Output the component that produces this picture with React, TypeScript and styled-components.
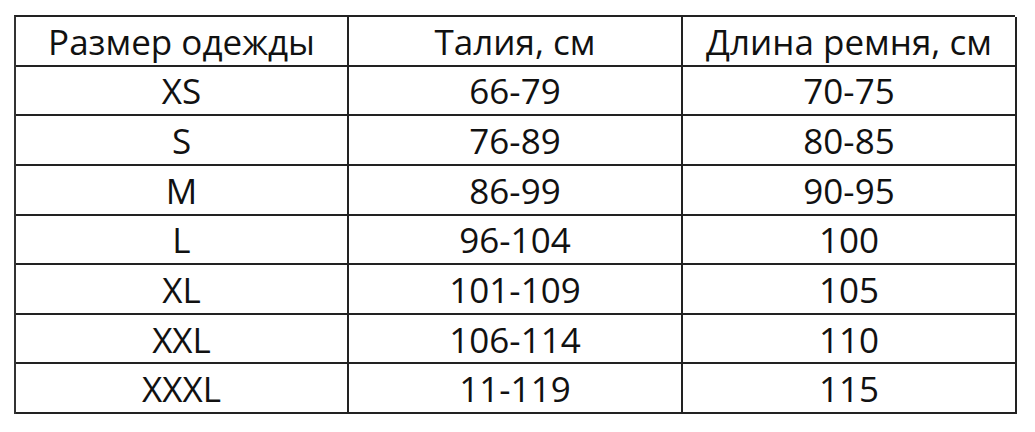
import React from 'react'
import styled, { createGlobalStyle } from 'styled-components'

const GlobalStyle = createGlobalStyle`
  body {
    margin: 0;
    background: #ffffff;
    font-family: "Open Sans", "Noto Sans", sans-serif;
  }
`

const Page = styled.div`
  width: 1035px;
  height: 432px;
  padding: 15px 0 0 14px;
  box-sizing: border-box;
`

const SizeGrid = styled.div`
  display: grid;
  grid-template-columns: 333px 334px 334px;
  grid-template-rows: repeat(8, 1fr);
  width: 1001px;
  height: 399px;
  box-sizing: border-box;
  border-top: 2px solid #222;
  border-left: 2px solid #333;
  color: #111;
`

const Cell = styled.div`
  display: flex;
  align-items: center;
  justify-content: center;
  border-right: 2px solid #222;
  border-bottom: 2px solid #222;
  font-size: 35px;
  line-height: 1;
  padding-top: 1px;
`

const rows = [
  ['Размер одежды', 'Талия, см', 'Длина ремня, см'],
  ['XS', '66-79', '70-75'],
  ['S', '76-89', '80-85'],
  ['M', '86-99', '90-95'],
  ['L', '96-104', '100'],
  ['XL', '101-109', '105'],
  ['XXL', '106-114', '110'],
  ['XXXL', '11-119', '115'],
]

const App = () => (
  <Page>
    <GlobalStyle />
    <SizeGrid>
      {rows.map((row, i) =>
        row.map((text, j) => <Cell key={`${i}-${j}`}>{text}</Cell>)
      )}
    </SizeGrid>
  </Page>
)

export default App
